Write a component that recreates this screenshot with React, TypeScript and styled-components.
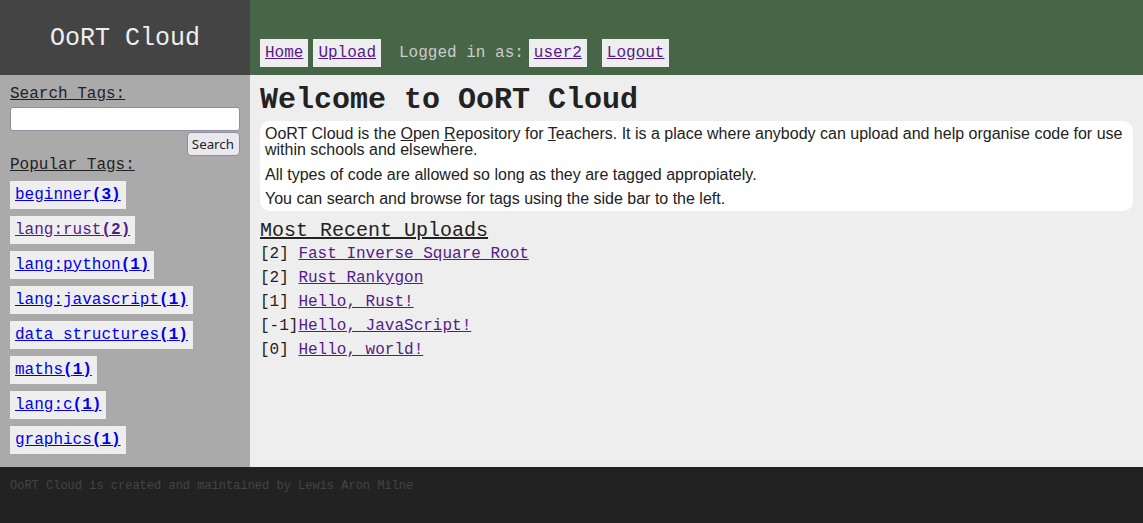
import styled, { createGlobalStyle } from "styled-components";

const GlobalStyle = createGlobalStyle`
  html, body {
    margin: 0;
    padding: 0;
  }
  body {
    font-family: "Liberation Mono", monospace;
    font-size: 16px;
    color: #222;
    background: #222;
  }
  a {
    color: #0000ee;
  }
  a.visited {
    color: #551a8b;
  }
`;

const StyledPage = styled.div`
  display: flex;
  flex-direction: column;
  min-height: 100vh;
`;

const StyledHeader = styled.header`
  display: flex;
  height: 75px;
`;

const StyledTitle = styled.div`
  width: 250px;
  display: flex;
  align-items: center;
  justify-content: center;
  padding-top: 2px;
  box-sizing: border-box;
  background-color: #444;
  color: #eee;
  font-size: 25px;
`;

const StyledNav = styled.nav`
  flex: 1;
  display: flex;
  align-items: flex-end;
  padding: 0 10px 8.5px;
  background-color: #476647;
`;

const StyledNavLink = styled.a<{ $gap?: number }>`
  display: block;
  padding: 5px;
  margin-right: ${(p) => p.$gap ?? 0}px;
  background-color: #eee;
  color: #551a8b;
`;

const StyledNavText = styled.span`
  padding: 5px 0;
  margin-right: 5px;
  color: #ccc;
`;

const StyledBody = styled.div`
  display: flex;
`;

const StyledSidebar = styled.aside`
  width: 250px;
  box-sizing: border-box;
  padding: 10px 10px 13px;
  background-color: #aaa;
  display: flex;
  flex-direction: column;
`;

const StyledLabel = styled.label`
  text-decoration: underline;
`;

const StyledInput = styled.input`
  display: block;
  box-sizing: border-box;
  width: 100%;
  height: 24px;
  margin: 3.5px 0 0;
  padding: 1px 4px;
  border: 1px solid #8f8f9d;
  border-radius: 3px;
  background-color: #fff;
  font-family: "Noto Sans", sans-serif;
  font-size: 13.33px;
`;

const StyledButton = styled.button`
  align-self: flex-end;
  box-sizing: border-box;
  height: 24px;
  margin: 1px 0 0;
  padding: 0 5px 0 4px;
  border: 1px solid #8f8f9d;
  border-radius: 4px;
  background-color: #e9e9ed;
  color: #222;
  font-family: "Noto Sans", sans-serif;
  font-size: 13.33px;
`;

const StyledTagList = styled.div`
  display: flex;
  flex-direction: column;
  align-items: flex-start;
  gap: 7px;
  margin-top: 7.3px;
`;

const StyledTag = styled.a`
  display: block;
  padding: 5px;
  background-color: #eee;

  b {
    font-weight: bold;
  }
`;

const StyledMain = styled.main`
  flex: 1;
  padding: 7.5px 10px 10px;
  background-color: #eee;
`;

const StyledHeading = styled.h1`
  margin: 0 0 4px;
  font-size: 30px;
  font-weight: bold;
`;

const StyledInfo = styled.div`
  display: flex;
  flex-direction: column;
  gap: 8.5px;
  padding: 5.5px 5px 4px;
  background-color: #fff;
  border-radius: 10px;
  font-family: "Liberation Sans", Arial, sans-serif;

  p {
    margin: 0;
    line-height: 16px;
  }
`;

const StyledSubHeading = styled.h2`
  display: inline-block;
  margin: 9px 0 0;
  font-size: 20px;
  line-height: 22px;
  font-weight: normal;
  text-decoration: underline;
`;

const StyledUploadRow = styled.div`
  line-height: 24px;
  white-space: pre;

  a {
    color: #551a8b;
  }
`;

const StyledFooter = styled.footer`
  flex: 1;
  padding: 12px 10px;
  background-color: #222;
  color: #444;
  font-size: 12px;
`;

const tags = [
  { name: "beginner", count: 3 },
  { name: "lang:rust", count: 2, visited: true },
  { name: "lang:python", count: 1 },
  { name: "lang:javascript", count: 1 },
  { name: "data structures", count: 1 },
  { name: "maths", count: 1 },
  { name: "lang:c", count: 1 },
  { name: "graphics", count: 1 },
];

const uploads = [
  { score: 2, title: "Fast Inverse Square Root" },
  { score: 2, title: "Rust Rankygon" },
  { score: 1, title: "Hello, Rust!" },
  { score: -1, title: "Hello, JavaScript!" },
  { score: 0, title: "Hello, world!" },
];

export default function App() {
  return (
    <>
      <GlobalStyle />
      <StyledPage>
        <StyledHeader>
          <StyledTitle>OoRT Cloud</StyledTitle>
          <StyledNav>
            <StyledNavLink href="#" $gap={5}>Home</StyledNavLink>
            <StyledNavLink href="#" $gap={18}>Upload</StyledNavLink>
            <StyledNavText>Logged in as:</StyledNavText>
            <StyledNavLink href="#" $gap={15}>user2</StyledNavLink>
            <StyledNavLink href="#">Logout</StyledNavLink>
          </StyledNav>
        </StyledHeader>
        <StyledBody>
          <StyledSidebar>
            <StyledLabel htmlFor="search">Search Tags:</StyledLabel>
            <StyledInput id="search" type="text" />
            <StyledButton>Search</StyledButton>
            <StyledLabel>Popular Tags:</StyledLabel>
            <StyledTagList>
              {tags.map((t) => (
                <StyledTag key={t.name} href="#" className={t.visited ? "visited" : undefined}>
                  {t.name}<b>({t.count})</b>
                </StyledTag>
              ))}
            </StyledTagList>
          </StyledSidebar>
          <StyledMain>
            <StyledHeading>Welcome to OoRT Cloud</StyledHeading>
            <StyledInfo>
              <p>
                OoRT Cloud is the <u>O</u>pen <u>R</u>epository for <u>T</u>eachers. It is a place where anybody can upload and help organise code for use within schools and elsewhere.
              </p>
              <p>All types of code are allowed so long as they are tagged appropiately.</p>
              <p>You can search and browse for tags using the side bar to the left.</p>
            </StyledInfo>
            <StyledSubHeading>Most Recent Uploads</StyledSubHeading>
            {uploads.map((u) => (
              <StyledUploadRow key={u.title}>
                {`[${u.score}]`.padEnd(4)}
                <a href="#">{u.title}</a>
              </StyledUploadRow>
            ))}
          </StyledMain>
        </StyledBody>
        <StyledFooter>OoRT Cloud is created and maintained by Lewis Aron Milne</StyledFooter>
      </StyledPage>
    </>
  );
}
